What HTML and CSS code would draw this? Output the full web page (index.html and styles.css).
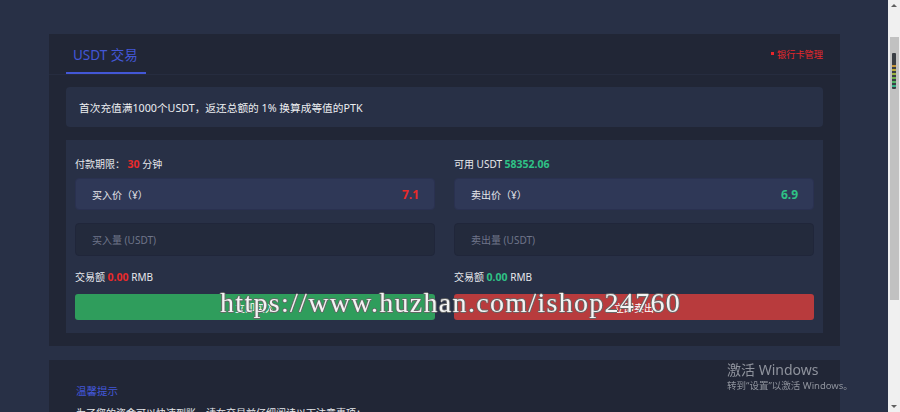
FILE: index.html
```html
<!DOCTYPE html>
<html lang="zh-CN">
<head>
    <meta charset="UTF-8">
    <meta name="viewport" content="width=device-width, initial-scale=1.0">
    <title>USDT 交易</title>
    <link rel="stylesheet" href="styles.css">
</head>
<body>
    <div class="page">
        <div class="panel">
            <div class="panel-head">
                <div class="tab">USDT 交易</div>
                <a class="bank-link" href="#"><span class="dot"></span>银行卡管理</a>
            </div>
            <div class="panel-body">
                <div class="notice">首次充值满1000个USDT，返还总额的 1% 换算成等值的PTK</div>

                <div class="trade-form">
                    <!-- 买入 -->
                    <div class="trade-col">
                        <div class="field-label">付款期限： <b class="red">30</b> 分钟</div>
                        <div class="price-box">
                            <span>买入价（¥）</span>
                            <span class="price-value red">7.1</span>
                        </div>
                        <input class="qty-input" type="text" placeholder="买入量 (USDT)">
                        <div class="field-label amount">交易额 <b class="red">0.00</b> RMB</div>
                        <button class="trade-btn buy">立即买入</button>
                    </div>
                    <!-- 卖出 -->
                    <div class="trade-col">
                        <div class="field-label">可用 USDT <b class="green">58352.06</b></div>
                        <div class="price-box">
                            <span>卖出价（¥）</span>
                            <span class="price-value green">6.9</span>
                        </div>
                        <input class="qty-input" type="text" placeholder="卖出量 (USDT)">
                        <div class="field-label amount">交易额 <b class="green">0.00</b> RMB</div>
                        <button class="trade-btn sell">立即卖出</button>
                    </div>
                </div>
            </div>
        </div>

        <div class="panel tips">
            <div class="tips-title">温馨提示</div>
            <p class="tips-text">为了您的资金可以快速到账，请在交易前仔细阅读以下注意事项：</p>
        </div>
    </div>

    <div class="scrollbar">
        <div class="sb-up"></div>
        <div class="sb-thumb"><div class="sb-widget"></div></div>
        <div class="sb-down"></div>
    </div>

    <div class="watermark">https://www.huzhan.com/ishop24760</div>
    <div class="activate">
        <div class="activate-title">激活 Windows</div>
        <div class="activate-sub">转到“设置”以激活 Windows。</div>
    </div>
</body>
</html>
```

FILE: styles.css
```css
body {
    margin: 0;
    height: 100vh;
    display: flex;
    overflow: hidden;
    background-color: #283046;
    color: #e4e6ea;
    font-family: "Noto Sans", "Noto Sans CJK SC", sans-serif;
}
.page {
    flex: 1;
    min-width: 0;
    padding: 34px 48px 0 49px;
    display: flex;
    flex-direction: column;
    gap: 14px;
}
.panel {
    background-color: #212636;
}
.panel-head {
    height: 40px;
    padding: 0 17px;
    display: flex;
    justify-content: space-between;
    border-bottom: 1px solid #262c3f;
}
.tab {
    padding: 2px 8px 0 7px;
    display: flex;
    align-items: center;
    white-space: nowrap;
    font-size: 13.5px;
    color: #4357d6;
    border-bottom: 2px solid #4357d6;
}
.bank-link {
    align-self: center;
    margin-top: -1px;
    display: flex;
    align-items: center;
    font-size: 9.2px;
    color: #e8262b;
    text-decoration: none;
}
.bank-link .dot {
    width: 3px;
    height: 3px;
    margin-right: 3px;
    background-color: #e8262b;
}
.panel-body {
    padding: 12px 17px 13px;
}
.notice {
    height: 40px;
    padding: 0 13px;
    display: flex;
    align-items: center;
    background-color: #283046;
    border-radius: 4px;
    font-size: 10.7px;
    color: #eceef1;
}
.trade-form {
    margin-top: 13px;
    padding: 16px 9px 13px;
    display: grid;
    grid-template-columns: 1fr 1fr;
    column-gap: 19px;
    background-color: #283046;
}
.trade-col {
    display: flex;
    flex-direction: column;
}
.field-label {
    font-size: 10px;
    line-height: 16px;
    color: #e6e8ec;
}
.field-label b {
    font-size: 10.5px;
}
.field-label.amount {
    margin-top: 13px;
}
.red {
    color: #ea2a2a;
}
.green {
    color: #2fc286;
}
.price-box {
    box-sizing: border-box;
    height: 32px;
    margin-top: 6px;
    padding: 0 15px 0 16px;
    display: flex;
    justify-content: space-between;
    align-items: center;
    background-color: #2f3857;
    border: 1px solid #2a3150;
    border-radius: 4px;
    font-size: 10px;
}
.price-value {
    font-size: 12px;
    font-weight: 700;
}
.qty-input {
    box-sizing: border-box;
    width: 100%;
    height: 33px;
    margin: 13px 0 0;
    padding: 0 16px;
    background-color: #232a3c;
    border: 1px solid #20263a;
    border-radius: 4px;
    font-family: inherit;
    font-size: 10px;
    color: #e4e6ea;
    outline: none;
}
.qty-input::placeholder {
    color: #6f758a;
}
.trade-btn {
    height: 26px;
    margin-top: 9px;
    border: none;
    border-radius: 3px;
    font-family: inherit;
    font-size: 10px;
    color: #ffffff;
    cursor: pointer;
}
.trade-btn.buy {
    background-color: #2f9d5c;
}
.trade-btn.sell {
    background-color: #b83b3d;
}
.tips {
    flex: 1;
    padding: 24px 27px;
}
.tips-title {
    font-size: 10.5px;
    line-height: 14px;
    color: #4357d6;
}
.tips-text {
    margin: 8px 0 0;
    font-size: 10px;
    line-height: 14px;
    color: #e6e8ec;
}

/* browser scrollbar */
.scrollbar {
    width: 12px;
    display: flex;
    flex-direction: column;
    align-items: center;
    background-color: #f0f0f0;
}
.sb-up,
.sb-down {
    width: 0;
    height: 0;
    border-left: 3px solid transparent;
    border-right: 3px solid transparent;
}
.sb-up {
    margin-top: 4px;
    border-bottom: 3px solid #606060;
}
.sb-thumb {
    width: 9px;
    height: 263px;
    margin-top: 30px;
    display: flex;
    justify-content: center;
    background-color: #c1c1c1;
}
.sb-widget {
    width: 4px;
    height: 36px;
    margin-top: 16px;
    border-radius: 1px;
    background-image:
        repeating-linear-gradient(to bottom, transparent 0 2px, #3a3e44 2px 4px),
        linear-gradient(to bottom, #3a3e44 0 12px, #c9913a 12px, #b9b23a 50%, #5db250 75%, #25b3a5);
}
.sb-down {
    margin-top: auto;
    margin-bottom: 4px;
    border-top: 3px solid #606060;
}

/* overlays */
.watermark {
    position: fixed;
    left: 220px;
    top: 287px;
    font-family: "Liberation Serif", serif;
    font-size: 28px;
    line-height: 32px;
    letter-spacing: 1.3px;
    color: #f4f4f4;
    white-space: nowrap;
    text-shadow: 1px 0 0 #666, -1px 0 0 #666, 0 1px 0 #666, 0 -1px 0 #666;
    pointer-events: none;
}
.activate {
    position: fixed;
    left: 727px;
    top: 361px;
    color: #8f939d;
    pointer-events: none;
}
.activate-title {
    font-size: 14px;
    line-height: 18px;
}
.activate-sub {
    font-size: 9.5px;
    line-height: 14px;
}
```
